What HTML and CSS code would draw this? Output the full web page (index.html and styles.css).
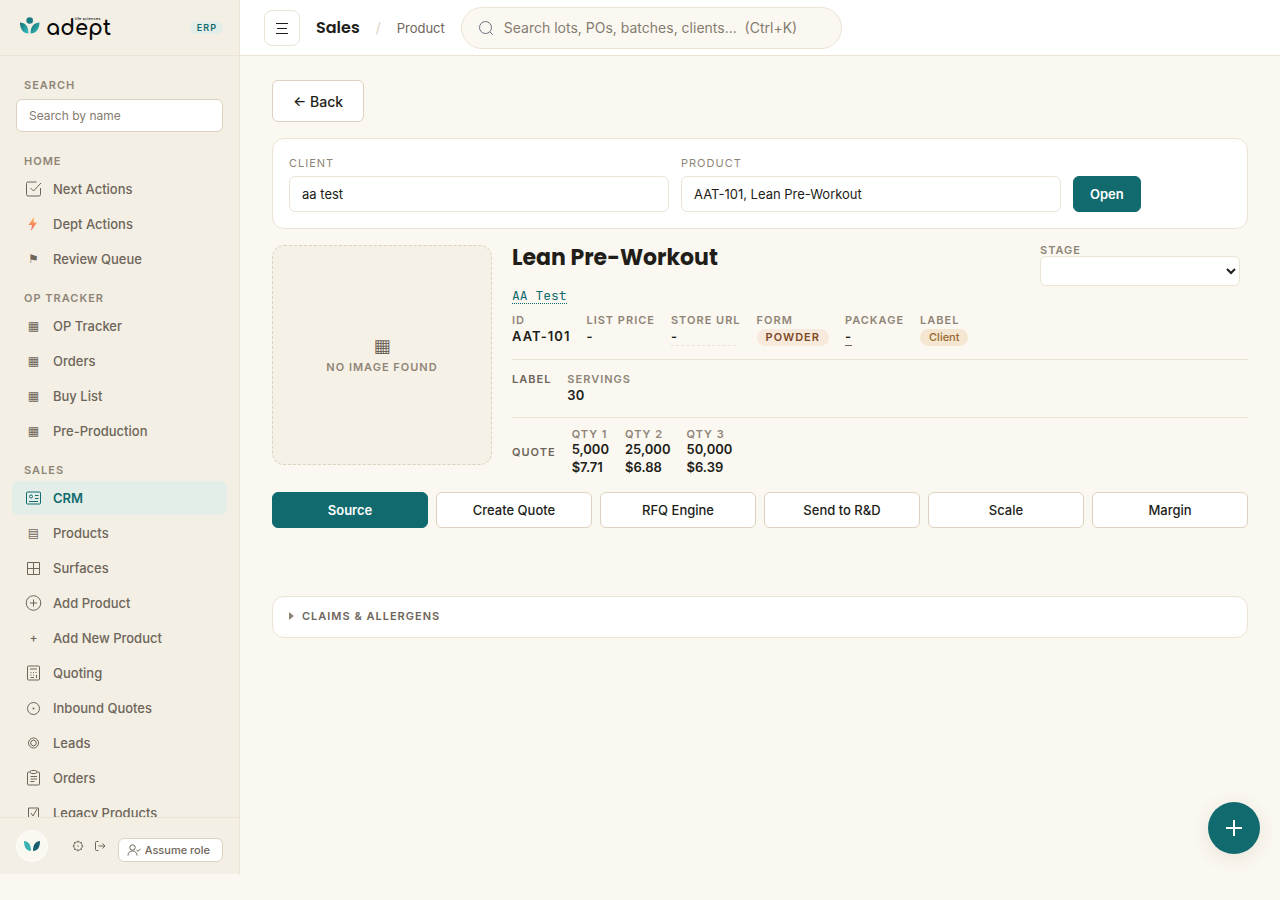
FILE: index.html
```html
<!DOCTYPE html>
<html lang="en">
<head>
  <meta charset="UTF-8">
  <meta name="viewport" content="width=device-width, initial-scale=1.0">
  <title>Lean Pre-Workout - Adept ERP</title>
  <link rel="stylesheet" href="styles.css">
</head>
<body>
  <div class="app">
    <aside class="sidebar">
      <div class="brand">
        <a href="#" class="logo" aria-label="adept">
          <svg class="logo-mark" viewBox="0 0 20 18">
            <defs>
              <linearGradient id="leaf" x1="0" y1="0" x2="1" y2="1">
                <stop offset="0" stop-color="#126f73"/>
                <stop offset="1" stop-color="#3abfc0"/>
              </linearGradient>
            </defs>
            <circle cx="9.700" cy="3.500" r="3.300" fill="#197c83"/>
            <path d="M0 5.500C5 6 8.500 8.500 8.500 16.500C3 16.500 0 12 0 5.500Z" fill="url(#leaf)"/>
            <path d="M19.500 5.500C14.500 6 10.500 8.500 10.500 16.500C16 16.500 19.500 12 19.500 5.500Z" fill="url(#leaf)"/>
          </svg>
          <span class="logo-name">adept<span class="logo-sub">life sciences</span></span>
        </a>
        <span class="env">ERP</span>
      </div>

      <nav class="nav">
        <label class="nav-label" for="nav-search">Search</label>
        <input class="nav-search" id="nav-search" type="text" placeholder="Search by name">

        <div class="nav-label">Home</div>
        <a href="#" class="nav-item"><svg class="icon" viewBox="0 0 16 16"><path d="M15 7v6.500a1.500 1.500 0 0 1-1.500 1.500h-11A1.500 1.500 0 0 1 1 13.500v-11A1.500 1.500 0 0 1 2.500 1H11M5 7l3 3 7.500-8"/></svg>Next Actions</a>
        <a href="#" class="nav-item"><svg class="icon" viewBox="0 0 16 16"><defs><linearGradient id="bolt" x1="0" y1="0" x2="0" y2="1"><stop offset="0" stop-color="#f9b44c"/><stop offset="1" stop-color="#f0606a"/></linearGradient></defs><path class="bolt" d="M8.500 1L3 9h3.500L5.500 15 11.500 6.500H8Z"/></svg>Dept Actions</a>
        <a href="#" class="nav-item"><span class="glyph">⚑</span>Review Queue</a>

        <div class="nav-label">OP Tracker</div>
        <a href="#" class="nav-item"><span class="glyph">▦</span>OP Tracker</a>
        <a href="#" class="nav-item"><span class="glyph">▦</span>Orders</a>
        <a href="#" class="nav-item"><span class="glyph">▦</span>Buy List</a>
        <a href="#" class="nav-item"><span class="glyph">▦</span>Pre-Production</a>

        <div class="nav-label">Sales</div>
        <a href="#" class="nav-item active"><svg class="icon" viewBox="0 0 16 16"><rect x="1" y="2" width="14" height="12" rx="1"/><circle cx="5.500" cy="6.500" r="1.500"/><path d="M9.500 5.500H13M9.500 8.500H13M3.500 11.500h9"/></svg>CRM</a>
        <a href="#" class="nav-item"><span class="glyph">▤</span>Products</a>
        <a href="#" class="nav-item"><svg class="icon" viewBox="0 0 16 16"><path d="M2 2.500h12v12H2ZM8 2.500v12M2 8.500h12"/></svg>Surfaces</a>
        <a href="#" class="nav-item"><svg class="icon" viewBox="0 0 16 16"><circle cx="8" cy="8" r="7.300"/><path d="M8 4.500v7M4.500 8h7"/></svg>Add Product</a>
        <a href="#" class="nav-item"><span class="glyph">+</span>Add New Product</a>
        <a href="#" class="nav-item"><svg class="icon" viewBox="0 0 16 16"><rect x="2" y="1" width="12" height="14" rx="1"/><path d="M4.500 4h7M5 7.500h1M7.500 7.500h1M10 7.500h1M5 10h1M7.500 10h1M5 12.500h3.500M11 10v3"/></svg>Quoting</a>
        <a href="#" class="nav-item"><svg class="icon" viewBox="0 0 16 16"><circle cx="8" cy="8.500" r="6"/><circle class="dot" cx="8" cy="8.500" r="1"/></svg>Inbound Quotes</a>
        <a href="#" class="nav-item"><svg class="icon" viewBox="0 0 16 16"><circle cx="8" cy="8" r="5"/><circle cx="8" cy="8" r="2.800"/></svg>Leads</a>
        <a href="#" class="nav-item"><svg class="icon" viewBox="0 0 16 16"><path d="M5 2H3a1 1 0 0 0-1 1v11a1 1 0 0 0 1 1h10a1 1 0 0 0 1-1V3a1 1 0 0 0-1-1h-2"/><rect x="5" y=".5" width="6" height="3" rx="1"/><path d="M5 6.500h6.500M5 9h6.500M5 11.500h4"/></svg>Orders</a>
        <a href="#" class="nav-item"><svg class="icon" viewBox="0 0 16 16"><path d="M3 3h10v11H3ZM5.500 8l2 3 4-7"/></svg>Legacy Products</a>
      </nav>

      <div class="side-foot">
        <span class="avatar">
          <svg viewBox="0 0 18 12"><path d="M1 1c4 .3 7 3 7 10-4.500 0-7-3.500-7-10Z" fill="#38b2b0"/><path d="M17 1c-4 .3-7 3-7 10 4.500 0 7-3.500 7-10Z" fill="#145e6d"/></svg>
        </span>
        <button class="icon-btn" aria-label="Settings"><svg viewBox="0 0 12 12"><circle cx="6" cy="6" r="4.200"/><circle class="dot" cx="6" cy="6" r=".7"/><path d="M6 .7v1.100M6 10.200v1.100M.7 6h1.100M10.200 6h1.100M2.200 2.200l.8.800M9 9l.8.800M2.200 9.800L3 9M9 3l.8-.8"/></svg></button>
        <button class="icon-btn" aria-label="Sign out"><svg viewBox="0 0 12 12"><path d="M4.500 1.500H2.500a1 1 0 0 0-1 1v7a1 1 0 0 0 1 1h2M4.500 6H11M8.500 3.500L11 6 8.500 8.500"/></svg></button>
        <button class="role-btn"><svg viewBox="0 0 14 12"><circle cx="5.500" cy="3.500" r="2.700"/><path d="M1 11.500c0-3 2-4.500 4.500-4.500S10 8.500 10 11.500M9.500 6l1.500 1.200L13.500 5"/></svg>Assume role</button>
      </div>
    </aside>

    <div class="page">
      <header class="topbar">
        <button class="menu-btn" aria-label="Menu"><svg viewBox="0 0 12 12"><path d="M0 1.500h12M1 6.500h10M0 11.500h12"/></svg></button>
        <strong class="crumb-root">Sales</strong>
        <span class="crumb-sep">/</span>
        <span class="crumb">Product</span>
        <label class="search">
          <svg viewBox="0 0 16 16"><circle cx="7.500" cy="7.500" r="6"/><path d="M11.800 11.800L14.800 14.800"/></svg>
          <input type="search" aria-label="Search" placeholder="Search lots, POs, batches, clients...  (Ctrl+K)">
        </label>
      </header>

      <main class="main">
        <button class="btn back">← Back</button>

        <form class="card picker">
          <div class="field">
            <label for="client">Client</label>
            <input id="client" type="text" value="aa test">
          </div>
          <div class="field">
            <label for="product">Product</label>
            <input id="product" type="text" value="AAT-101, Lean Pre-Workout">
          </div>
          <button type="button" class="btn primary open">Open</button>
        </form>

        <section class="hero">
          <div class="no-image">
            <span class="no-image-glyph">▦</span>
            <span class="caps">No image found</span>
          </div>
          <div class="details">
            <div class="title-row">
              <h1>Lean Pre-Workout</h1>
              <div class="stage">
                <label class="caps" for="stage">Stage</label>
                <select id="stage"><option></option></select>
              </div>
            </div>
            <a href="#" class="client-link">AA Test</a>

            <div class="facts">
              <div class="fact"><span class="caps">ID</span><span class="value code">AAT-101</span></div>
              <div class="fact"><span class="caps">List price</span><span class="value code">-</span></div>
              <div class="fact"><span class="caps">Store URL</span><span class="value code editable">-</span></div>
              <div class="fact"><span class="caps">Form</span><span class="pill form">Powder</span></div>
              <div class="fact"><span class="caps">Package</span><span class="value code package">-</span></div>
              <div class="fact"><span class="caps">Label</span><span class="pill client">Client</span></div>
            </div>

            <div class="facts label-facts">
              <span class="caps dark">Label</span>
              <div class="fact"><span class="caps">Servings</span><span class="value">30</span></div>
            </div>

            <div class="facts quote">
              <span class="caps dark">Quote</span>
              <div class="fact"><span class="caps">Qty 1</span><span class="value">5,000</span><span class="value">$7.71</span></div>
              <div class="fact"><span class="caps">Qty 2</span><span class="value">25,000</span><span class="value">$6.88</span></div>
              <div class="fact"><span class="caps">Qty 3</span><span class="value">50,000</span><span class="value">$6.39</span></div>
            </div>
          </div>
        </section>

        <div class="actions">
          <button class="btn primary">Source</button>
          <button class="btn">Create Quote</button>
          <button class="btn">RFQ Engine</button>
          <button class="btn">Send to R&amp;D</button>
          <button class="btn">Scale</button>
          <button class="btn">Margin</button>
        </div>

        <details class="card claims">
          <summary class="caps dark">Claims &amp; Allergens</summary>
        </details>
      </main>
    </div>
  </div>

  <button class="fab" aria-label="Add"><svg viewBox="0 0 16 16"><path d="M8 0v16M0 8h16"/></svg></button>
</body>
</html>
```
FILE: styles.css
```css
:root {
  --bg: #fbf8f1;
  --side: #f3efe4;
  --line: #ebe4d5;
  --line-strong: #dcd2bf;
  --text: #211d18;
  --muted: #6e655a;
  --faint: #8f8577;
  --teal: #116b6e;
  --teal-soft: #e3eee9;
}
* {
  box-sizing: border-box;
}
body {
  margin: 0;
  background: var(--bg);
  color: var(--text);
  font-family: Inter, "DejaVu Sans", sans-serif;
  font-size: 13px;
}
button, input, select {
  font: inherit;
  color: inherit;
}
button {
  cursor: pointer;
}
a {
  color: inherit;
  text-decoration: none;
}
svg {
  flex: none;
  fill: none;
  stroke: currentColor;
}
.app {
  display: flex;
  height: calc(100vh - 26px);
}

/* Sidebar */
.sidebar {
  display: flex;
  flex-direction: column;
  flex: 0 0 240px;
  background: var(--side);
  border-right: 1px solid var(--line);
}
.brand {
  display: flex;
  align-items: center;
  justify-content: space-between;
  flex: 0 0 56px;
  padding: 0 16px 0 20px;
  border-bottom: 1px solid var(--line);
}
.logo {
  display: flex;
  align-items: center;
  gap: 6px;
}
.logo-mark {
  width: 20px;
  height: 18px;
  margin-bottom: 3px;
  stroke: none;
}
.logo-name {
  position: relative;
  color: #080808;
  font-family: Comfortaa, Poppins, Lato, sans-serif;
  font-size: 21px;
  font-weight: 700;
  line-height: 28px;
}
.logo-sub {
  position: absolute;
  top: 2px;
  left: 29px;
  font-size: 4px;
  line-height: 6px;
  white-space: nowrap;
}
.env {
  padding: 0 6px 0 7px;
  border-radius: 8px;
  background: var(--teal-soft);
  color: var(--teal);
  font-size: 9px;
  font-weight: 600;
  line-height: 13px;
  letter-spacing: 1px;
}
.nav {
  flex: 1;
  min-height: 0;
  overflow: hidden;
  padding: 8px 12px 0;
}
.nav-label {
  display: block;
  padding: 13px 12px 3px;
  color: var(--faint);
  font-size: 11px;
  font-weight: 600;
  line-height: 16px;
  letter-spacing: 1px;
  text-transform: uppercase;
}
.nav-search {
  display: block;
  width: calc(100% - 8px);
  height: 33px;
  margin: 3px 4px 8px;
  padding: 0 12px;
  border: 1px solid var(--line-strong);
  border-radius: 6px;
  background: #fff;
  font-size: 12px;
}
input::placeholder {
  color: #857c70;
  opacity: 1;
}
.nav-item {
  display: flex;
  align-items: center;
  gap: 11px;
  height: 34px;
  margin-bottom: 1px;
  padding: 0 13px;
  border-radius: 6px;
  color: var(--muted);
  font-weight: 500;
}
.nav-item.active {
  background: var(--teal-soft);
  color: var(--teal);
  font-weight: 600;
}
.icon {
  width: 17px;
  height: 16px;
}
.bolt {
  fill: url(#bolt);
  stroke: none;
}
.dot {
  fill: currentColor;
  stroke: none;
}
.glyph {
  width: 17px;
  font-size: 12px;
  line-height: 14px;
  text-align: center;
}
.side-foot {
  display: flex;
  align-items: center;
  flex: 0 0 57px;
  padding: 0 16px;
  border-top: 1px solid var(--line);
  color: var(--muted);
}
.avatar {
  display: flex;
  align-items: center;
  justify-content: center;
  width: 32px;
  height: 32px;
  margin-right: 19px;
  border: 1px solid #fff;
  border-radius: 50%;
  background: var(--bg);
}
.avatar svg {
  width: 18px;
  height: 12px;
  stroke: none;
}
.icon-btn {
  padding: 0 5px;
  border: 0;
  background: none;
}
.icon-btn svg {
  display: block;
  width: 12px;
  height: 12px;
}
.role-btn {
  display: flex;
  align-items: center;
  gap: 4px;
  height: 24px;
  margin: 8px 0 0 auto;
  padding: 0 12px 0 8px;
  border: 1px solid var(--line-strong);
  border-radius: 6px;
  background: #fff;
  font-size: 11px;
  font-weight: 500;
  white-space: nowrap;
}
.role-btn svg {
  width: 14px;
  height: 12px;
}

/* Top bar */
.page {
  flex: 1;
  min-width: 0;
}
.topbar {
  display: flex;
  align-items: center;
  gap: 16px;
  height: 56px;
  padding: 0 24px;
  border-bottom: 1px solid var(--line);
  background: #fff;
}
.menu-btn {
  display: flex;
  align-items: center;
  justify-content: center;
  width: 36px;
  height: 36px;
  padding: 0;
  border: 1px solid var(--line);
  border-radius: 8px;
  background: #fff;
}
.menu-btn svg {
  width: 12px;
  height: 12px;
}
.crumb-root {
  font-family: Poppins, Inter, sans-serif;
  font-size: 16px;
  font-weight: 600;
}
.crumb-sep {
  color: var(--line-strong);
  font-size: 14px;
}
.crumb {
  color: var(--muted);
  font-size: 13px;
}
.search {
  display: flex;
  align-items: center;
  gap: 10px;
  flex: 0 1 381px;
  height: 42px;
  padding: 0 16px;
  border: 1px solid var(--line);
  border-radius: 21px;
  background: var(--bg);
}
.search svg {
  width: 16px;
  height: 16px;
  color: #6b7080;
}
.search input {
  flex: 1;
  min-width: 0;
  padding: 0;
  border: 0;
  outline: 0;
  background: none;
  font-size: 14px;
}

/* Content */
.main {
  padding: 24px 32px;
}
.btn {
  height: 36px;
  padding: 0 16px;
  border: 1px solid var(--line-strong);
  border-radius: 6px;
  background: #fff;
  font-weight: 500;
}
.btn.primary {
  border-color: var(--teal);
  background: var(--teal);
  color: #fff;
  font-weight: 600;
}
.btn.back {
  display: block;
  height: 42px;
  padding: 0 20px;
  font-size: 14px;
}
.card {
  border: 1px solid var(--line);
  border-radius: 12px;
  background: #fff;
}
.picker {
  display: flex;
  align-items: flex-end;
  gap: 12px;
  margin: 16px 0;
  padding: 16px;
}
.field {
  flex: 0 1 380px;
}
.field label {
  display: block;
  margin-bottom: 4px;
  color: var(--faint);
  font-size: 11px;
  line-height: 17px;
  letter-spacing: 1px;
  text-transform: uppercase;
}
.field input {
  display: block;
  width: 100%;
  height: 36px;
  padding: 0 12px;
  border: 1px solid var(--line);
  border-radius: 6px;
  background: #fff;
}
.caps {
  color: var(--faint);
  font-size: 11px;
  font-weight: 600;
  line-height: 11px;
  letter-spacing: 1px;
  text-transform: uppercase;
}
.caps.dark {
  color: var(--muted);
}
.hero {
  display: grid;
  grid-template-columns: 220px 1fr;
  align-items: start;
  gap: 20px;
}
.no-image {
  display: flex;
  flex-direction: column;
  align-items: center;
  justify-content: center;
  gap: 4px;
  height: 220px;
  padding-bottom: 4px;
  border: 1px dashed var(--line-strong);
  border-radius: 12px;
  background: #f6f1e6;
}
.no-image-glyph {
  color: var(--muted);
  font-size: 18px;
  line-height: 24px;
}
.title-row {
  display: flex;
  justify-content: space-between;
  padding-right: 8px;
}
h1 {
  margin: 0;
  font-family: Poppins, Inter, sans-serif;
  font-size: 22px;
  font-weight: 700;
  line-height: 26px;
}
.stage {
  display: flex;
  flex-direction: column;
  width: 200px;
}
.stage select {
  width: 100%;
  height: 30px;
  border: 1px solid var(--line);
  border-radius: 6px;
  background: #fff;
}
.client-link {
  display: table;
  margin: 3px 0 9px;
  border-bottom: 1px dotted var(--teal);
  color: var(--teal);
  font-family: "JetBrains Mono", "Liberation Mono", monospace;
  font-size: 13px;
  line-height: 14px;
}
.facts {
  display: flex;
  gap: 16px;
}
.fact {
  display: flex;
  flex-direction: column;
  align-items: flex-start;
}
.fact .caps {
  line-height: 14px;
}
.value {
  font-size: 13px;
  font-weight: 600;
  line-height: 18px;
}
.value.code {
  letter-spacing: 1px;
}
.value.editable {
  width: 65px;
  border-bottom: 1px dashed var(--line);
}
.value.package {
  border-bottom: 1px solid var(--muted);
}
.pill {
  margin-top: 2px;
  padding: 0 9px;
  border-radius: 9px;
  font-size: 11px;
  line-height: 17px;
}
.pill.form {
  background: #f7e9dc;
  color: #7c4a26;
  font-weight: 600;
  letter-spacing: 1px;
  text-transform: uppercase;
}
.pill.client {
  background: #f4e6d0;
  color: #986631;
  font-weight: 500;
}
.label-facts {
  margin: 13px 0 10px;
  padding: 12px 0 13px;
  border-top: 1px solid var(--line);
  border-bottom: 1px solid var(--line);
}
.label-facts > .caps {
  line-height: 14px;
}
.quote {
  align-items: center;
}
.quote .fact .caps {
  line-height: 12px;
}
.actions {
  display: grid;
  grid-template-columns: repeat(6, 1fr);
  gap: 8px;
  margin: 16px 0 68px;
}
.claims {
  padding: 12px 16px 14px;
}
.claims summary {
  display: flex;
  align-items: center;
  gap: 8px;
  line-height: 14px;
  cursor: pointer;
}
.claims summary::before {
  content: "";
  border: 4px solid transparent;
  border-right-width: 0;
  border-left: 5px solid var(--faint);
}
.fab {
  position: fixed;
  right: 20px;
  bottom: 46px;
  display: flex;
  align-items: center;
  justify-content: center;
  width: 52px;
  height: 52px;
  padding: 0;
  border: 0;
  border-radius: 50%;
  background: var(--teal);
  color: #fff;
  box-shadow: 0 4px 20px rgba(60, 45, 20, 0.1);
}
.fab svg {
  width: 16px;
  height: 16px;
  stroke-width: 2;
}
```
